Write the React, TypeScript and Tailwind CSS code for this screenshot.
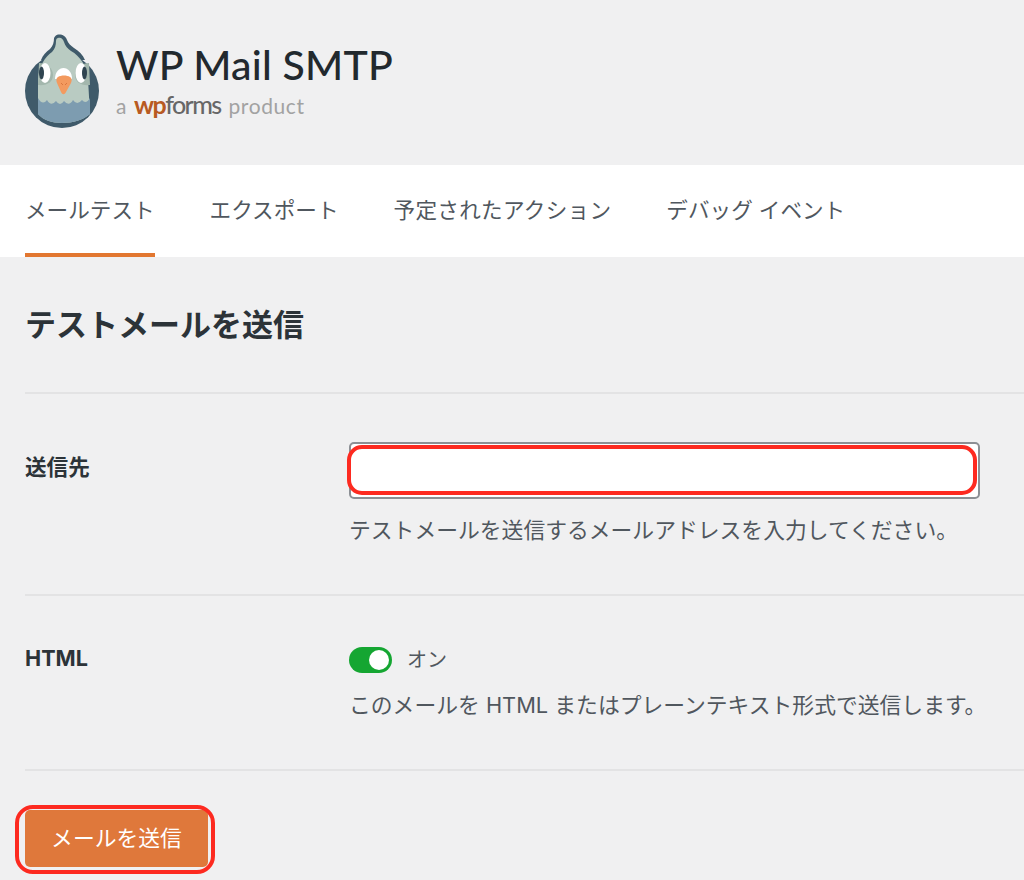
const jp = "font-['Inter','Noto_Sans_CJK_JP',sans-serif]";

function Logo() {
  return (
    <svg width="76" height="94" viewBox="0 0 76 94" className="shrink-0">
      <circle cx="37" cy="57" r="37" fill="#3f5a6a" />
      <path d="M33 0.500C37 0 41 2 42 6C43 9 46 12 49 14C54 17 58 21 60 26L16 26C18 21 21 18 25 15C28 12 29 8 29 4C30 2 31 1 33 0.500z" fill="#3f5a6a" />
      <path d="M33 4C36 3 38 5 39 8C40 12 43 15 46 17C55 22 62 32 63 45L65 80C58 86 48 89 37 89C27 89 18 86 13 80L13 45C14 32 20 23 27 18C30 15 31 11 31 7C31 5 32 4 33 4z" fill="#b9cbc2" />
      <path d="M13 64Q17.500 72 22 66Q26 73 31 67Q35 73 39 67Q44 73 48 66Q52 72 57 66Q61 71 65 64L65 80C58 86 48 89 37 89C27 89 18 86 13 80z" fill="#7d9cb0" />
      <path d="M14 29C22 29 28 34 28 41C28 48 22 52 13 51z" fill="#a3b7ad" />
      <path d="M64 29C56 29 50 34 50 41C50 48 56 52 65 51z" fill="#a3b7ad" />
      <ellipse cx="20" cy="39" rx="5.500" ry="10" fill="#ffffff" />
      <ellipse cx="56" cy="39" rx="5.500" ry="10" fill="#ffffff" />
      <ellipse cx="16.500" cy="39" rx="2.500" ry="6.500" fill="#2f4450" />
      <ellipse cx="59.500" cy="39" rx="2.500" ry="6.500" fill="#2f4450" />
      <path d="M30 45C30 38 34 34 38.500 34C43 34 47 38 47 45z" fill="#ffffff" />
      <path d="M33 43C36 41 42 41 45 43C47 44 47 47 46 49L41 58C39.500 61 37.500 61 36 58L32 49C31 47 31 44 33 43z" fill="#f39a5f" />
      <path d="M36 49L38 51M42 49L40 51" stroke="#d9773f" strokeWidth="1" fill="none" />
    </svg>
  );
}

function Row({ label, top, children, h }: { label: string; top: string; children: React.ReactNode; h: string }) {
  return (
    <div className={`flex border-b-2 border-[#e3e3e4] ${h}`}>
      <div className={`w-[324px] shrink-0 text-[21.6px] font-bold leading-[28px] text-[#2c3338] ${top}`}>{label}</div>
      <div className="flex-1 min-w-0">{children}</div>
    </div>
  );
}

export default function App() {
  return (
    <div className={`relative h-[880px] w-[1024px] overflow-hidden bg-[#f0f0f1] ${jp}`}>
      <header className="flex h-[165px] items-center gap-[15px] pb-[3px] pl-[25px]">
        <Logo />
        <div>
          <div className="text-[41px] font-medium leading-[48px] tracking-[0.2px] text-[#22292e] font-['Lato',sans-serif]">WP Mail SMTP</div>
          <div className="flex items-baseline text-[21px] leading-[30px] tracking-[0.6px] text-[#a2a2a2] font-['Lato',sans-serif]">
            <span>a</span>
            <span className="ml-[7px] text-[25px] font-bold tracking-[-1.6px] text-[#b85a22]">wp</span>
            <span className="text-[25px] font-medium tracking-[-1.6px] text-[#676767]">forms</span>
            <span className="ml-[8px]">product</span>
          </div>
        </div>
      </header>

      <nav className="flex h-[92px] gap-[55px] bg-white px-[25px] text-[21.6px] text-[#50575e]">
        <div className="flex h-full items-center border-b-4 border-[#e27730] pt-[2px]">メールテスト</div>
        <div className="flex h-full items-center pb-[2px]">エクスポート</div>
        <div className="flex h-full items-center pb-[2px] tracking-[0.3px]">予定されたアクション</div>
        <div className="flex h-full items-center pb-[2px]">デバッグ イベント</div>
      </nav>

      <main className="pl-[25px]">
        <h1 className="flex h-[137px] items-center border-b-2 border-[#e3e3e4] pt-[1px] text-[31px] font-bold text-[#2c3338]">テストメールを送信</h1>

        <Row label="送信先" top="pt-[59px]" h="h-[202px]">
          <input
            aria-label="送信先"
            className="mt-[48px] block h-[57px] w-[631px] rounded-[5px] border-2 border-[#8c8f94] bg-white"
          />
          <p className="mt-[15px] text-[21.8px] leading-[32px] text-[#50575e] whitespace-nowrap">テストメールを送信するメールアドレスを入力してください。</p>
        </Row>

        <Row label="HTML" top="pt-[48px]" h="h-[175px]">
          <div className="mt-[50px] flex items-center gap-[15px]">
            <span className="flex h-[26px] w-[43px] items-center justify-end rounded-full bg-[#15a632] pr-[3px]">
              <span className="h-[20px] w-[20px] rounded-full bg-white" />
            </span>
            <span className="text-[20px] leading-[28px] text-[#50575e]">オン</span>
          </div>
          <p className="mt-[15px] text-[21.8px] leading-[32px] text-[#50575e] whitespace-nowrap">このメールを HTML またはプレーンテキスト形式で送信します。</p>
        </Row>

        <button className="mt-[39px] flex h-[57px] w-[183px] items-center justify-center rounded-[5px] bg-[#df783b] text-[21.8px] text-white">メールを送信</button>
      </main>

      <div className="absolute left-[347px] top-[445px] h-[50px] w-[630px] rounded-[15px] border-4 border-[#fd2a20]" />
      <div className="absolute left-[15px] top-[805px] h-[69px] w-[200px] rounded-[18px] border-4 border-[#fd2a20]" />
    </div>
  );
}
